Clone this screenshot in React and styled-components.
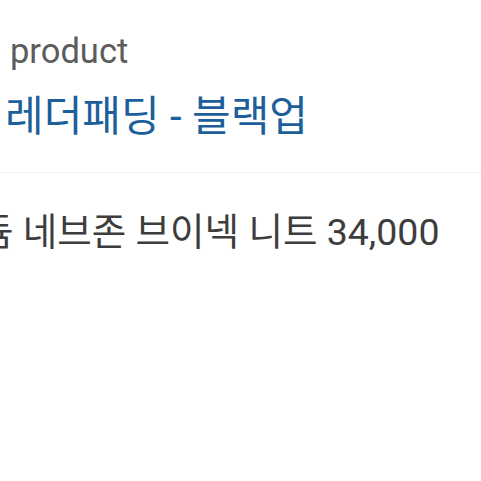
import React from "react";
import styled, { createGlobalStyle } from "styled-components";

const GlobalStyle = createGlobalStyle`
  html, body {
    margin: 0;
    padding: 0;
    background: #ffffff;
  }
  body {
    font-family: Roboto, "Noto Sans CJK KR", sans-serif;
  }
`;

const Page = styled.div`
  width: 481px;
  height: 481px;
  overflow: hidden;
  background: #ffffff;
`;

const Header = styled.div`
  padding: 31px 0 0 10px;
  border-bottom: 1px solid #f0f0f0;
  height: 173px;
  box-sizing: border-box;
`;

const Category = styled.div`
  font-size: 34.5px;
  line-height: 40px;
  color: #5c5c5c;
`;

const Title = styled.div`
  margin-top: 22px;
  margin-left: -5px;
  font-size: 42px;
  line-height: 48px;
  color: #1d5f9b;
  white-space: nowrap;
`;

const Body = styled.div`
  padding-top: 35px;
`;

const Description = styled.div`
  margin-left: -21px;
  font-size: 37.5px;
  line-height: 48px;
  color: #3d3d3d;
  white-space: nowrap;
`;

export default function App() {
  return (
    <>
      <GlobalStyle />
      <Page>
        <Header>
          <Category>product</Category>
          <Title>레더패딩 - 블랙업</Title>
        </Header>
        <Body>
          <Description>듐 네브존 브이넥 니트 34,000</Description>
        </Body>
      </Page>
    </>
  );
}
